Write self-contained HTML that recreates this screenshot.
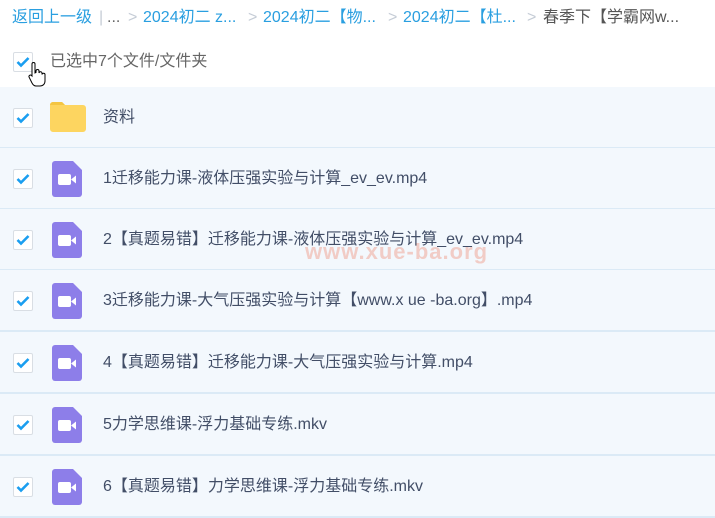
<!DOCTYPE html>
<html><head><meta charset="utf-8"><style>
*{margin:0;padding:0;box-sizing:border-box}
body{width:715px;height:508px;overflow:hidden;background:#fff;font-family:"Liberation Sans","Noto Sans CJK SC",sans-serif;font-size:16px;color:#424e67;position:relative}
.bc{position:absolute;top:8px;left:12px;white-space:nowrap;color:#2a9fe0;font-size:16px;line-height:20px}
.bc span{position:absolute;top:0}
.g{color:#c5ccd6}
.cb{position:absolute;left:13px;width:20px;height:20px;border:1px solid #d9dee4;background:#fff;border-radius:2px}
.cb svg{position:absolute;left:2px;top:3px}
.hd{position:absolute;left:50px;top:52px;color:#666;line-height:20px}
.row{position:absolute;left:0;width:715px;height:62px;background:#f3f8fd;border-bottom:2px solid #dbeaf6}
.row .cb{top:21px}
.row .t{position:absolute;left:103px;top:20px;line-height:22px;color:#424e67}
.vid{position:absolute;left:52px;top:13px}
</style></head><body>
<div class="bc">
<span style="left:0">返回上一级</span><span class="g" style="left:87px">|</span><span style="left:95px;color:#666">...</span>
<span class="g" style="left:116px">&gt;</span><span style="left:131px">2024初二 z...</span>
<span class="g" style="left:236px">&gt;</span><span style="left:251px">2024初二【物...</span>
<span class="g" style="left:376px">&gt;</span><span style="left:391px">2024初二【杜...</span>
<span class="g" style="left:515px">&gt;</span><span style="left:531px;color:#555">春季下【学霸网w...</span>
</div>
<div class="cb" style="top:52px"><svg width="14" height="12" viewBox="0 0 14 12"><path d="M1.5 6l3.5 3.5L12.5 2" stroke="#1a9ef0" stroke-width="2.6" fill="none"/></svg></div>
<div class="hd">已选中7个文件/文件夹</div>

<div class="row" style="top:87px"><div class="cb"><svg width="14" height="12" viewBox="0 0 14 12"><path d="M1.5 6l3.5 3.5L12.5 2" stroke="#1a9ef0" stroke-width="2.6" fill="none"/></svg></div>
<svg style="position:absolute;left:50px;top:15px" width="36" height="30" viewBox="0 0 36 30"><path d="M0 3a3 3 0 0 1 3-3h9l3 3h18a3 3 0 0 1 3 3v21a3 3 0 0 1-3 3H3a3 3 0 0 1-3-3z" fill="#fdd560"/><path d="M0 3a3 3 0 0 1 3-3h9l3 3z" fill="#f4c542"/></svg>
<div class="t">资料</div></div>

<div class="row" style="top:148px"><div class="cb"><svg width="14" height="12" viewBox="0 0 14 12"><path d="M1.5 6l3.5 3.5L12.5 2" stroke="#1a9ef0" stroke-width="2.6" fill="none"/></svg></div><svg class="vid" width="30" height="36" viewBox="0 0 30 36"><path d="M3 0h18l9 9v24a3 3 0 0 1-3 3H3a3 3 0 0 1-3-3V3a3 3 0 0 1 3-3z" fill="#8d7ee9"/><rect x="6" y="13" width="13" height="11" rx="2" fill="#fff"/><path d="M19 18.5l5-4v8z" fill="#fff"/></svg><div class="t">1迁移能力课-液体压强实验与计算_ev_ev.mp4</div></div>

<div class="row" style="top:209px"><div class="cb"><svg width="14" height="12" viewBox="0 0 14 12"><path d="M1.5 6l3.5 3.5L12.5 2" stroke="#1a9ef0" stroke-width="2.6" fill="none"/></svg></div><svg class="vid" width="30" height="36" viewBox="0 0 30 36"><path d="M3 0h18l9 9v24a3 3 0 0 1-3 3H3a3 3 0 0 1-3-3V3a3 3 0 0 1 3-3z" fill="#8d7ee9"/><rect x="6" y="13" width="13" height="11" rx="2" fill="#fff"/><path d="M19 18.5l5-4v8z" fill="#fff"/></svg><div class="t">2【真题易错】迁移能力课-液体压强实验与计算_ev_ev.mp4</div>
<div style="position:absolute;left:305px;top:30px;font-size:22px;font-weight:bold;color:rgba(240,150,130,.45);letter-spacing:1px">www.xue-ba.org</div></div>

<div class="row" style="top:270px"><div class="cb"><svg width="14" height="12" viewBox="0 0 14 12"><path d="M1.5 6l3.5 3.5L12.5 2" stroke="#1a9ef0" stroke-width="2.6" fill="none"/></svg></div><svg class="vid" width="30" height="36" viewBox="0 0 30 36"><path d="M3 0h18l9 9v24a3 3 0 0 1-3 3H3a3 3 0 0 1-3-3V3a3 3 0 0 1 3-3z" fill="#8d7ee9"/><rect x="6" y="13" width="13" height="11" rx="2" fill="#fff"/><path d="M19 18.5l5-4v8z" fill="#fff"/></svg><div class="t">3迁移能力课-大气压强实验与计算【www.x ue -ba.org】.mp4</div></div>

<div class="row" style="top:332px"><div class="cb"><svg width="14" height="12" viewBox="0 0 14 12"><path d="M1.5 6l3.5 3.5L12.5 2" stroke="#1a9ef0" stroke-width="2.6" fill="none"/></svg></div><svg class="vid" width="30" height="36" viewBox="0 0 30 36"><path d="M3 0h18l9 9v24a3 3 0 0 1-3 3H3a3 3 0 0 1-3-3V3a3 3 0 0 1 3-3z" fill="#8d7ee9"/><rect x="6" y="13" width="13" height="11" rx="2" fill="#fff"/><path d="M19 18.5l5-4v8z" fill="#fff"/></svg><div class="t">4【真题易错】迁移能力课-大气压强实验与计算.mp4</div></div>

<div class="row" style="top:394px"><div class="cb"><svg width="14" height="12" viewBox="0 0 14 12"><path d="M1.5 6l3.5 3.5L12.5 2" stroke="#1a9ef0" stroke-width="2.6" fill="none"/></svg></div><svg class="vid" width="30" height="36" viewBox="0 0 30 36"><path d="M3 0h18l9 9v24a3 3 0 0 1-3 3H3a3 3 0 0 1-3-3V3a3 3 0 0 1 3-3z" fill="#8d7ee9"/><rect x="6" y="13" width="13" height="11" rx="2" fill="#fff"/><path d="M19 18.5l5-4v8z" fill="#fff"/></svg><div class="t">5力学思维课-浮力基础专练.mkv</div></div>

<div class="row" style="top:456px"><div class="cb"><svg width="14" height="12" viewBox="0 0 14 12"><path d="M1.5 6l3.5 3.5L12.5 2" stroke="#1a9ef0" stroke-width="2.6" fill="none"/></svg></div><svg class="vid" width="30" height="36" viewBox="0 0 30 36"><path d="M3 0h18l9 9v24a3 3 0 0 1-3 3H3a3 3 0 0 1-3-3V3a3 3 0 0 1 3-3z" fill="#8d7ee9"/><rect x="6" y="13" width="13" height="11" rx="2" fill="#fff"/><path d="M19 18.5l5-4v8z" fill="#fff"/></svg><div class="t">6【真题易错】力学思维课-浮力基础专练.mkv</div></div>

<svg style="position:absolute;left:27px;top:62px" width="20" height="26" viewBox="0 0 20 26"><path d="M5 2a1.5 1.5 0 0 1 3 0v9l1-.5V9a1.5 1.5 0 0 1 3 0v2a1.5 1.5 0 0 1 3 .5v1a1.5 1.5 0 0 1 3 .5v6c0 3-2 5-5 5H9c-2 0-3-1-4-3L2 15a1.5 1.5 0 0 1 2.5-1.5L5 14z" fill="#fff" stroke="#000" stroke-width="1"/></svg>
</body></html>
